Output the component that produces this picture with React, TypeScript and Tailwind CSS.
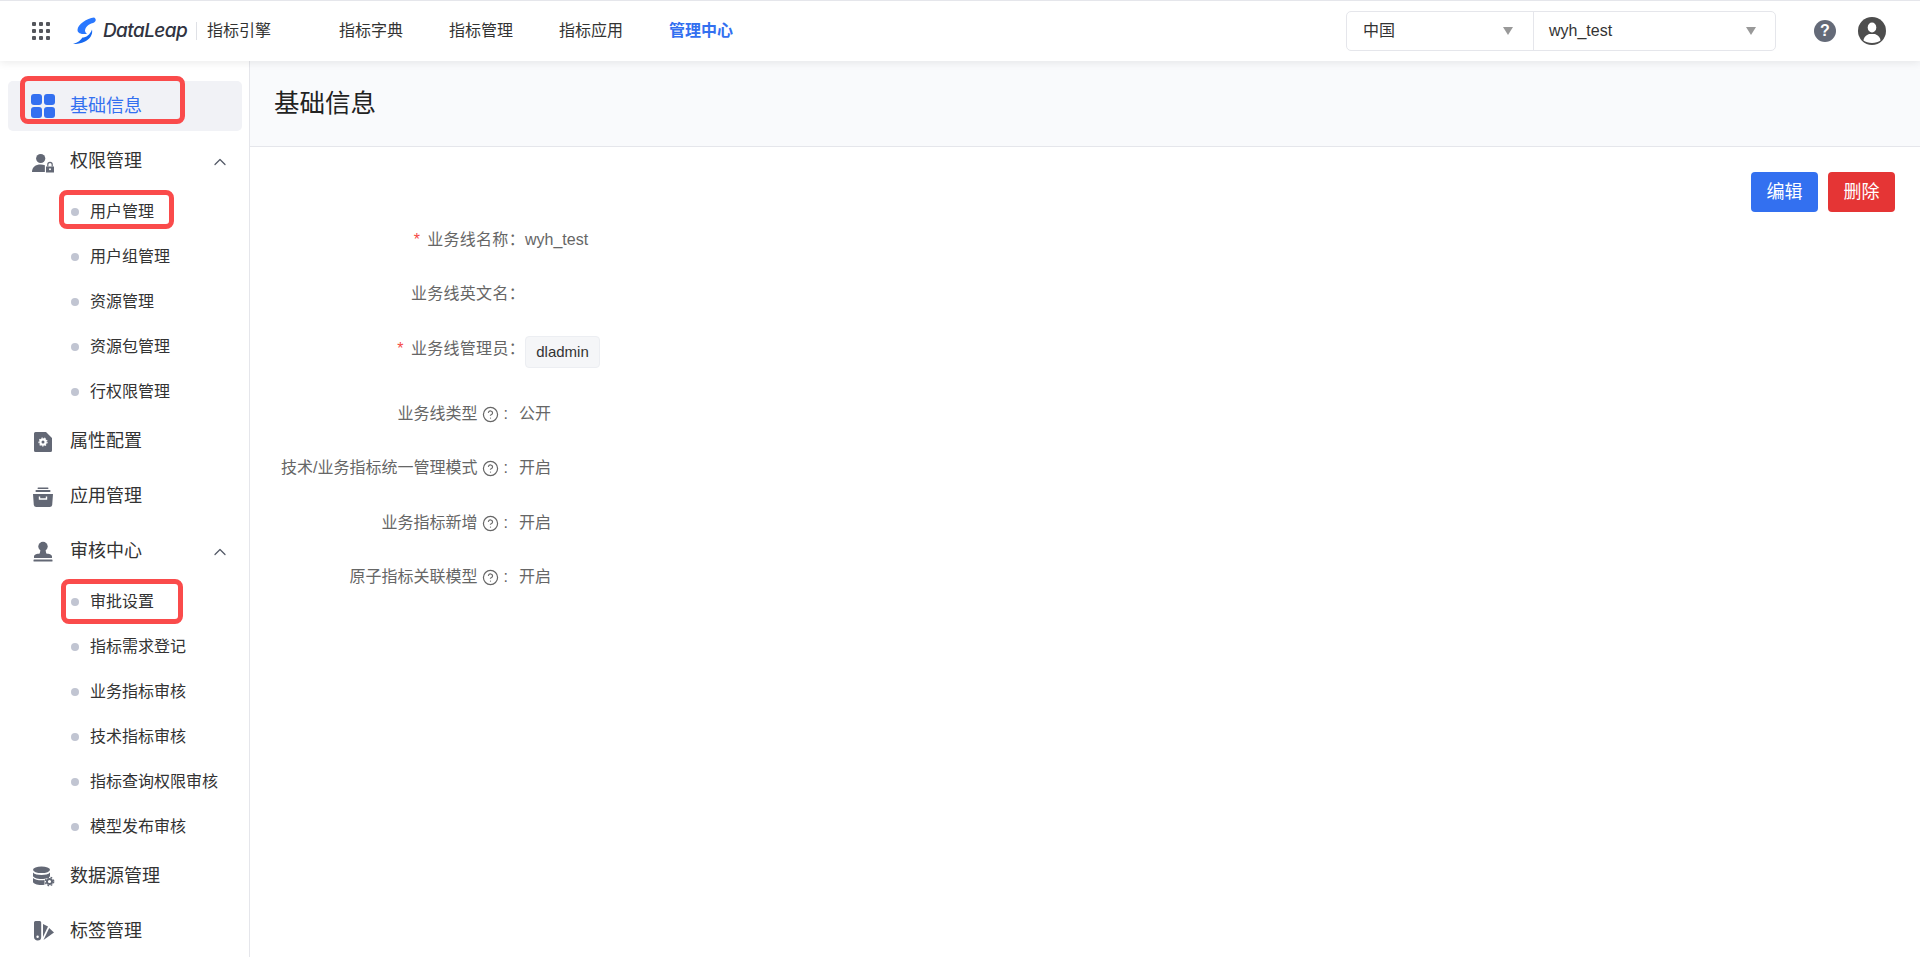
import { ChevronUp, CircleHelp } from 'lucide-react';
import type { ReactNode } from 'react';

function Redbox({ className }: { className: string }) {
  return <div className={`absolute border-[5px] border-[#fa4b4b] rounded-[8px] pointer-events-none ${className}`} />;
}

function GroupItem({ icon, label, open }: { icon: ReactNode; label: string; open?: boolean }) {
  return (
    <div className="flex items-center h-[55px] pl-[31px] pr-[19px] text-[18px] text-[#333]">
      <span className="w-[24px] h-[24px] mr-[15px]">{icon}</span>
      <span className="flex-1">{label}</span>
      {open && <ChevronUp size={20} strokeWidth={1.5} className="text-[#555b68]" />}
    </div>
  );
}

function SubItem({ label, box }: { label: string; box?: string }) {
  return (
    <div className="relative flex items-center h-[45px] pl-[71px] text-[16px] text-[#333]">
      <span className="w-[8px] h-[8px] rounded-full bg-[#c1c5d2] mr-[11px]" />
      {label}
      {box && <Redbox className={box} />}
    </div>
  );
}

function Svg({ children }: { children: ReactNode }) {
  return (
    <svg viewBox="0 0 24 24" width="24" height="24" fill="#636875">
      {children}
    </svg>
  );
}

const UserLockIcon = (
  <Svg>
    <circle cx="9.7" cy="8.5" r="4.6" />
    <path d="M1 22c0-5 3.5-7.500 8.700-7.500 1.600 0 3 .2 4.200.8V22H1z" />
    <path d="M15 16.500h8V22.500h-8z" />
    <path d="M16.800 16.500v-2a2.200 2.200 0 0 1 4.400 0v2" fill="none" stroke="#636875" strokeWidth="1.200" />
    <circle cx="19" cy="19.300" r="1" fill="#fff" />
  </Svg>
);

const FileGearIcon = (
  <Svg>
    <path d="M4.500 2H15l6 6v12.500a1.500 1.500 0 0 1-1.500 1.500h-15A1.500 1.500 0 0 1 3 20.500V3.500A1.500 1.500 0 0 1 4.500 2z" />
    <circle cx="12" cy="12" r="2.600" fill="none" stroke="#fff" strokeWidth="2.200" />
    <circle cx="12" cy="12" r="4" fill="none" stroke="#fff" strokeWidth="1.200" strokeDasharray="1.400 1.400" />
  </Svg>
);

const ArchiveIcon = (
  <Svg>
    <rect x="6.500" y="2.500" width="11" height="1.500" rx=".7" />
    <rect x="4.500" y="5" width="15" height="2" rx=".8" />
    <path d="M2 9h20l-.8 11a2.500 2.500 0 0 1-2.500 2H5.300a2.500 2.500 0 0 1-2.500-2L2 9z" />
    <path d="M8.500 11.500v2.500h7v-2.500" fill="none" stroke="#fff" strokeWidth="1.400" />
  </Svg>
);

const StampIcon = (
  <Svg>
    <circle cx="12" cy="6.500" r="4.700" />
    <path d="M9.500 10h5l.8 3.500c2.500.3 5.700 1 5.700 3V18H3v-1.500c0-2 3.200-2.700 5.700-3L9.500 10z" />
    <rect x="2.500" y="19.500" width="19" height="2" rx=".6" />
  </Svg>
);

const DatabaseIcon = (
  <Svg>
    <ellipse cx="10.500" cy="4.800" rx="8.500" ry="3.300" />
    <path d="M2 7.500v3.200c0 1.800 3.800 3.300 8.500 3.300s8.500-1.500 8.500-3.300V7.500C17.500 9.300 14 10 10.500 10S3.500 9.300 2 7.500z" />
    <path d="M2 13v3.700c0 1.800 3.800 3.300 8.500 3.300 1 0 2-.1 3-.2V15c-1 .2-2 .3-3 .3-3.500 0-7-.6-8.500-2.300z" />
    <circle cx="18.500" cy="16.500" r="2.600" fill="none" stroke="#636875" strokeWidth="2" />
    <circle cx="18.500" cy="16.500" r="4.200" fill="none" stroke="#636875" strokeWidth="1.300" strokeDasharray="1.700 1.700" />
  </Svg>
);

const SwatchIcon = (
  <Svg>
    <path d="M4.500 1h4.200A1.500 1.500 0 0 1 10.200 2.500V17a3.500 3.500 0 0 1-3.500 3.500A3.500 3.500 0 0 1 3 17V2.500A1.500 1.500 0 0 1 4.500 1z" />
    <circle cx="6.600" cy="16.800" r="1.200" fill="#fff" />
    <path d="M12 4l5 2.500-5 10.500z" />
    <path d="M18.200 8l4.800 4.500-10.500 7.500z" />
  </Svg>
);

const GridDotsIcon = (
  <div className="grid grid-cols-3 gap-[3px] w-[18px] mr-[23px]">
    {Array.from({ length: 9 }).map((_, i) => (
      <span key={i} className="w-[4px] h-[4px] rounded-[1px] bg-[#54565c]" />
    ))}
  </div>
);

function Caret() {
  return (
    <svg viewBox="0 0 10 8" width="10" height="8">
      <path d="M0 0h10L5 8z" fill="#999" />
    </svg>
  );
}

function FormRow({ label, value, required, tight }: { label: string; value?: ReactNode; required?: boolean; tight?: boolean }) {
  return (
    <div className={`flex items-start text-[16px] leading-[22px] ${tight ? 'mb-[31px]' : 'mb-[32px]'}`}>
      <div className="w-[275px] text-right text-[#666] tracking-[0.3px] whitespace-nowrap">
        {required && <span className="text-[#f54a45] mr-[7px]">*</span>}
        {label}：
      </div>
      {value && <div className="text-[#666]">{value}</div>}
    </div>
  );
}

function HelpRow({ label, value, tight }: { label: string; value: string; tight?: boolean }) {
  return (
    <div className={`flex items-center text-[16px] leading-[22px] text-[#666] ${tight ? 'mb-[32px]' : 'mb-[33px]'}`}>
      <div className="w-[269px] flex items-center justify-end whitespace-nowrap">
        {label}
        <CircleHelp size={17} strokeWidth={1.700} className="ml-[4px] text-[#666]" />
        <span className="ml-[5px] mr-[11px]">:</span>
      </div>
      {value}
    </div>
  );
}

export default function App() {
  const navs = ['指标字典', '指标管理', '指标应用'];

  return (
    <div className="h-screen w-full flex flex-col overflow-hidden bg-white font-['Liberation_Sans','Noto_Sans_CJK_SC',sans-serif]">
      <header className="relative z-10 h-[61px] shrink-0 flex items-center border-t border-[#e5e6eb] bg-white pl-[32px] shadow-[0_2px_8px_rgba(0,0,0,0.08)]">
        {GridDotsIcon}
        <svg viewBox="0 0 24 28" width="24" height="28" className="mr-[6px] mt-[-1px]">
          <path d="M21 .5C23.500 1.500 23.500 5 20 6c-5 1.500-7.500 4-8 7.500 0 1.500 1 2.500 2 3.500-5 .5-9.500-.5-9.500-4C4.500 7 14 1.500 21 .5z" fill="#2a78ff" />
          <path d="M19 12.500c1 5-2 9.500-7 12-4 2-8 2.500-12 2.500 5-1.500 8-4 9.500-6.500 3.500 0 7.500-2.500 9.500-8z" fill="#1668f0" />
        </svg>
        <span className="w-[83px] font-['Inter',sans-serif] italic text-[19px] font-medium text-[#30333f] tracking-[-0.6px] whitespace-nowrap">DataLeap</span>
        <span className="w-px h-[18px] bg-[#dfe1e6] mx-[10px]" />
        <span className="text-[16px] text-[#333]">指标引擎</span>
        <nav className="flex gap-[46px] ml-[68px] text-[16px] text-[#333]">
          {navs.map((n) => (
            <span key={n}>{n}</span>
          ))}
          <span className="font-bold text-[#3370f0]">管理中心</span>
        </nav>
        <div className="ml-auto flex h-[40px] w-[430px] border border-[#e5e6eb] rounded-[5px] text-[16px] text-[#333]">
          <div className="flex items-center justify-between w-[187px] pl-[16px] pr-[20px] border-r border-[#e5e6eb]">
            中国
            <Caret />
          </div>
          <div className="flex items-center justify-between flex-1 pl-[15px] pr-[19px]">
            wyh_test
            <Caret />
          </div>
        </div>
        <span className="ml-[38px] w-[22px] h-[22px] rounded-full bg-[#646a78] text-white text-[16px] font-bold flex items-center justify-center">?</span>
        <svg viewBox="0 0 28 28" width="28" height="28" className="ml-[22px] mr-[34px]">
          <circle cx="14" cy="14" r="14" fill="#4d4d4d" />
          <ellipse cx="14" cy="10.500" rx="4.300" ry="5" fill="#fff" />
          <path d="M5.500 23.500c.5-4 3-5.500 5.500-6.500h6c2.500 1 5 2.500 5.500 6.500-2 1.500-5 2.500-8.500 2.500s-6.500-1-8.500-2.500z" fill="#fff" />
        </svg>
      </header>

      <div className="flex flex-1 min-h-0">
        <aside className="w-[250px] shrink-0 border-r border-[#e5e6eb] pt-[20px] overflow-hidden">
          <div className="relative flex items-center h-[50px] ml-[8px] mr-[7px] mb-[3px] pl-[23px] rounded-[5px] bg-[#f1f2f6] text-[18px] text-[#3370f0]">
            <svg viewBox="0 0 24 24" width="24" height="24" className="mr-[15px]" fill="#3370f0">
              <rect x="0" y="0" width="11" height="11" rx="3" />
              <rect x="13" y="0" width="11" height="11" rx="3" />
              <rect x="0" y="13" width="11" height="11" rx="3" />
              <rect x="13" y="13" width="11" height="11" rx="3" />
            </svg>
            基础信息
            <Redbox className="left-[12px] top-[-5px] w-[165px] h-[48px]" />
          </div>

          <GroupItem icon={UserLockIcon} label="权限管理" open />
          <SubItem label="用户管理" box="left-[59px] top-[1px] w-[115px] h-[39px]" />
          <SubItem label="用户组管理" />
          <SubItem label="资源管理" />
          <SubItem label="资源包管理" />
          <SubItem label="行权限管理" />
          <GroupItem icon={FileGearIcon} label="属性配置" />
          <GroupItem icon={ArchiveIcon} label="应用管理" />
          <GroupItem icon={StampIcon} label="审核中心" open />
          <SubItem label="审批设置" box="left-[61px] top-[0px] w-[122px] h-[45px]" />
          <SubItem label="指标需求登记" />
          <SubItem label="业务指标审核" />
          <SubItem label="技术指标审核" />
          <SubItem label="指标查询权限审核" />
          <SubItem label="模型发布审核" />
          <GroupItem icon={DatabaseIcon} label="数据源管理" />
          <GroupItem icon={SwatchIcon} label="标签管理" />
        </aside>

        <main className="flex-1 min-w-0">
          <div className="h-[86px] flex items-center pl-[24px] bg-[#f9fafc] border-b border-[#e5e6eb] text-[25.5px] text-[#222]">
            基础信息
          </div>
          <div className="flex justify-end gap-[10px] pt-[25px] pr-[25px]">
            <button className="w-[67px] h-[40px] rounded-[4px] bg-[#3370f0] text-white text-[18px]">编辑</button>
            <button className="w-[67px] h-[40px] rounded-[4px] bg-[#e53535] text-white text-[18px]">删除</button>
          </div>
          <div className="mt-[17px]">
            <FormRow label="业务线名称" required value="wyh_test" />
            <FormRow label="业务线英文名" tight />
            <div className="flex items-start text-[16px] leading-[22px] mb-[35px]">
              <div className="w-[275px] text-right text-[#666] tracking-[0.3px] whitespace-nowrap mt-[2px]">
                <span className="text-[#f54a45] mr-[7px]">*</span>
                业务线管理员：
              </div>
              <span className="w-[75px] h-[32px] flex items-center justify-center rounded-[4px] bg-[#f5f6f8] border border-[#eceef2] text-[15px] text-[#333]">
                dladmin
              </span>
            </div>
            <HelpRow label="业务线类型" value="公开" tight />
            <HelpRow label="技术/业务指标统一管理模式" value="开启" />
            <HelpRow label="业务指标新增" value="开启" tight />
            <HelpRow label="原子指标关联模型" value="开启" />
          </div>
        </main>
      </div>
    </div>
  );
}
